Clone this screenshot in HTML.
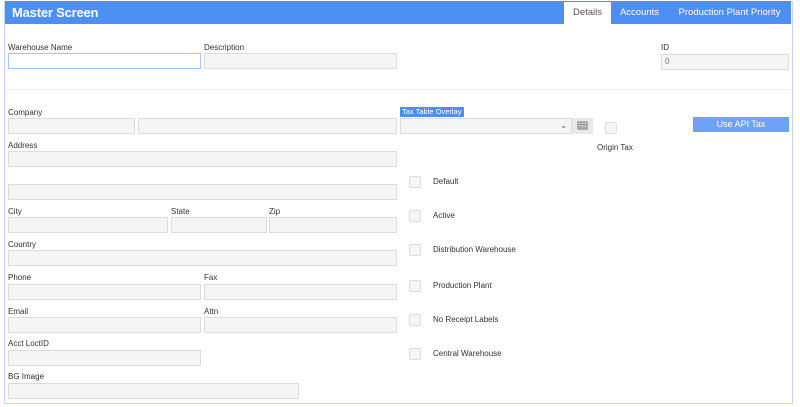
<!DOCTYPE html>
<html><head><style>
body{margin:0;width:800px;height:407px;background:#fff;font-family:"Liberation Sans",sans-serif;position:relative;overflow:hidden}
.a{position:absolute}
.frame{left:4px;top:1px;width:787px;height:402px;border:1px solid #c9d6f2;border-top:none}
.hdr{left:5px;top:1px;width:786px;height:23px;background:#4d8ff5}
.ttl{left:12px;top:5px;color:#fff;font-size:13px;font-weight:bold;letter-spacing:-0.2px}
.tab{top:2px;height:22px;line-height:22px;font-size:9.5px;color:#fff;text-align:center}
.lb{font-size:8px;color:#333}
.in{height:14px;border:1px solid #dcdcdc;background:#f5f5f5;box-sizing:content-box}
.cb{width:10px;height:10px;border:1px solid #ddd;background:#f5f5f5;border-radius:2px}
.ct{font-size:8px;color:#333}
</style></head><body>
<div class="a frame"></div>
<div class="a hdr"></div>
<div class="a ttl">Master Screen</div>
<div class="a tab" style="left:564px;width:47px;background:#fff;color:#555">Details</div>
<div class="a tab" style="left:611px;width:57px">Accounts</div>
<div class="a tab" style="left:668px;width:123px">Production Plant Priority</div>

<div class="a lb" style="left:8px;top:43px">Warehouse Name</div>
<div class="a in" style="left:8px;top:53px;width:191px;background:#fff;border-color:#a9c6f5"></div>
<div class="a lb" style="left:204px;top:43px">Description</div>
<div class="a in" style="left:204px;top:53px;width:191px"></div>
<div class="a lb" style="left:661px;top:43px">ID</div>
<div class="a in" style="left:661px;top:54px;font-size:8px;color:#777;line-height:14px;padding-left:3px;width:123px">0</div>
<div class="a" style="left:5px;top:89px;width:786px;height:1px;background:#eee"></div>

<div class="a lb" style="left:8px;top:108px">Company</div>
<div class="a in" style="left:8px;top:118px;width:125px"></div>
<div class="a in" style="left:138px;top:118px;width:257px"></div>
<div class="a" style="left:400px;top:107px;width:64px;height:10px;background:#4d8ff5;color:#fff;font-size:7.5px;line-height:10px;padding-left:2px;box-sizing:border-box;white-space:nowrap">Tax Table Overlay</div>
<div class="a in" style="left:400px;top:118px;width:170px;font-size:8px;color:#555;text-align:right;line-height:14px"><span style="margin-right:4px">⌄</span></div>
<div class="a" style="left:572px;top:118px;width:21px;height:16px;background:#e8e8e8"><svg width="21" height="16"><rect x="6" y="4" width="9" height="7" fill="none" stroke="#777"/><path d="M6 6.5h9M6 9h9M9 4v7M12 4v7" stroke="#777" stroke-width=".7"/></svg></div>
<div class="a cb" style="left:605px;top:122px"></div>
<div class="a ct" style="left:597px;top:143px">Origin Tax</div>
<div class="a" style="left:693px;top:117px;width:96px;height:15px;background:#6ea2f7;color:#fff;font-size:9px;text-align:center;line-height:15px">Use API Tax</div>

<div class="a lb" style="left:8px;top:141px">Address</div>
<div class="a in" style="left:8px;top:151px;width:387px"></div>
<div class="a in" style="left:8px;top:184px;width:387px"></div>
<div class="a lb" style="left:8px;top:207px">City</div>
<div class="a lb" style="left:171px;top:207px">State</div>
<div class="a lb" style="left:269px;top:207px">Zip</div>
<div class="a in" style="left:8px;top:217px;width:158px"></div>
<div class="a in" style="left:171px;top:217px;width:94px"></div>
<div class="a in" style="left:269px;top:217px;width:126px"></div>
<div class="a lb" style="left:8px;top:240px">Country</div>
<div class="a in" style="left:8px;top:250px;width:387px"></div>
<div class="a lb" style="left:8px;top:273px">Phone</div>
<div class="a lb" style="left:204px;top:273px">Fax</div>
<div class="a in" style="left:8px;top:284px;width:191px"></div>
<div class="a in" style="left:204px;top:284px;width:191px"></div>
<div class="a lb" style="left:8px;top:307px">Email</div>
<div class="a lb" style="left:204px;top:307px">Attn</div>
<div class="a in" style="left:8px;top:317px;width:191px"></div>
<div class="a in" style="left:204px;top:317px;width:191px"></div>
<div class="a lb" style="left:8px;top:339px">Acct LoctID</div>
<div class="a in" style="left:8px;top:350px;width:191px"></div>
<div class="a lb" style="left:8px;top:372px">BG Image</div>
<div class="a in" style="left:8px;top:383px;width:289px"></div>

<div class="a cb" style="left:409px;top:176px"></div><div class="a ct" style="left:433px;top:177px">Default</div>
<div class="a cb" style="left:409px;top:210px"></div><div class="a ct" style="left:433px;top:211px">Active</div>
<div class="a cb" style="left:409px;top:244px"></div><div class="a ct" style="left:433px;top:245px">Distribution Warehouse</div>
<div class="a cb" style="left:409px;top:280px"></div><div class="a ct" style="left:433px;top:281px">Production Plant</div>
<div class="a cb" style="left:409px;top:314px"></div><div class="a ct" style="left:433px;top:315px">No Receipt Labels</div>
<div class="a cb" style="left:409px;top:348px"></div><div class="a ct" style="left:433px;top:349px">Central Warehouse</div>
</body></html>
